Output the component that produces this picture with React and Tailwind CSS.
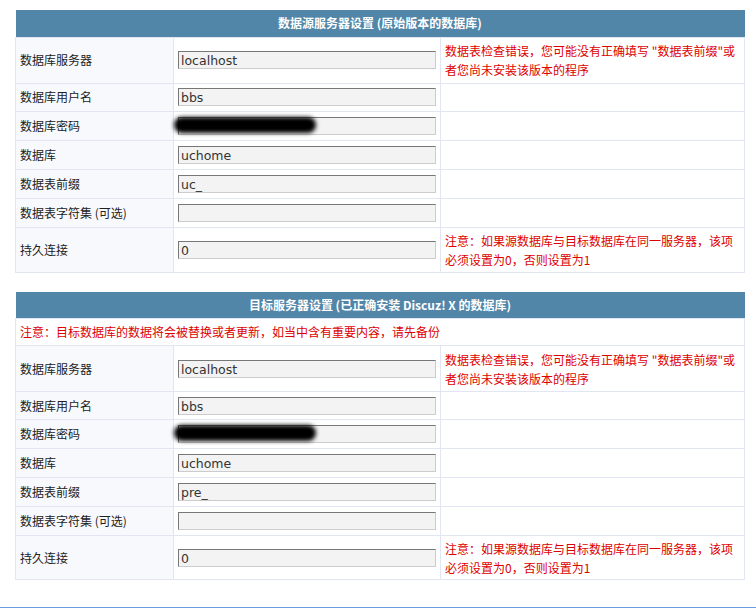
import React from 'react';

const cjk = { fontFamily: '"Noto Sans CJK SC", "DejaVu Sans", sans-serif' };

const sourceRows = [
  { label: '数据库服务器', value: 'localhost', h: 'h-[46px]', note: '数据表检查错误，您可能没有正确填写 "数据表前缀"或者您尚未安装该版本的程序' },
  { label: '数据库用户名', value: 'bbs', h: 'h-[28px]' },
  { label: '数据库密码', value: '', h: 'h-[29px]', secret: true },
  { label: '数据库', value: 'uchome', h: 'h-[29px]' },
  { label: '数据表前缀', value: 'uc_', h: 'h-[29px]' },
  { label: '数据表字符集 (可选)', value: '', h: 'h-[29px]' },
  { label: '持久连接', value: '0', h: 'h-[45px]', note: '注意：如果源数据库与目标数据库在同一服务器，该项必须设置为0，否则设置为1' },
];

const targetRows = sourceRows.map(r => {
  if (r.label === '数据表前缀') return { ...r, value: 'pre_' };
  if (r.label === '持久连接') return { ...r, h: 'h-[44px]' };
  return r;
});

const Field = ({ value, secret }) => (
  <div className="relative w-[258px]">
    <input
      type="text"
      readOnly
      value={value}
      className="block w-[258px] h-[18px] pl-[2px] pt-[1px] bg-[#f3f3f3] border border-t-[#777] border-l-[#777] border-b-[#ccc] border-r-[#ccc] text-[12.5px] leading-[16px] text-[#333] outline-none"
      style={{ fontFamily: '"DejaVu Sans", Verdana, sans-serif' }}
    />
    {secret && (
      <div className="absolute left-[-4px] top-[0px] w-[142px] h-[16px] rounded-full bg-black blur-[2px]" />
    )}
  </div>
);

const SettingsTable = ({ title, rows, warning }) => (
  <table className="w-[730px] border-collapse text-[12px] text-[#222]" style={cjk}>
    <tbody>
      <tr className="h-[27px]">
        <th colSpan={3} className="bg-[#5186a8] text-white font-bold text-center align-middle">{title}</th>
      </tr>
      {warning && (
        <tr className="h-[27px]">
          <td colSpan={3} className="border border-[#e2e6f2] pl-[4px] text-[#dd0000] align-middle">{warning}</td>
        </tr>
      )}
      {rows.map(row => (
        <tr key={row.label} className={row.h}>
          <td className="w-[158px] border border-[#e2e6f2] bg-[#f8f9fd] pl-[4px] align-middle">{row.label}</td>
          <td className="w-[267px] border border-[#e2e6f2] pl-[4px] align-middle">
            <Field value={row.value} secret={row.secret} />
          </td>
          <td className="border border-[#e2e6f2] pl-[4px] pr-[6px] text-[#dd0000] leading-[19px] align-middle">{row.note}</td>
        </tr>
      ))}
    </tbody>
  </table>
);

export default function App() {
  return (
    <div className="w-[756px] h-[609px] bg-white overflow-hidden flex flex-col">
      <div className="pt-[10px] pl-[15px] flex flex-col gap-[19px]">
        <SettingsTable title="数据源服务器设置 (原始版本的数据库)" rows={sourceRows} />
        <SettingsTable
          title="目标服务器设置 (已正确安装 Discuz! X 的数据库)"
          rows={targetRows}
          warning="注意：目标数据库的数据将会被替换或者更新，如当中含有重要内容，请先备份"
        />
      </div>
      <div className="mt-auto mb-[1px] h-[1px] shrink-0 bg-[#6b9bd8]" />
    </div>
  );
}
